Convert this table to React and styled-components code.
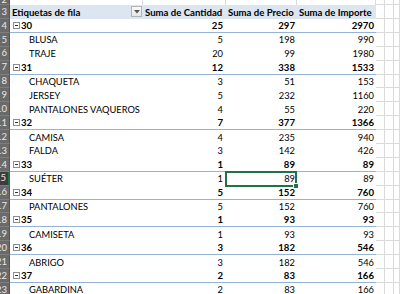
import React from 'react'
import styled, { createGlobalStyle, css } from 'styled-components';

const GRID = '#dadada';
const GROUP_LINE = '#95b3d7';
const GREEN = '#217346';

const data = [
    { label: '30', q: 25, p: 297, t: 2970, items: [['BLUSA', 5, 198, 990], ['TRAJE', 20, 99, 1980]] },
    { label: '31', q: 12, p: 338, t: 1533, items: [['CHAQUETA', 3, 51, 153], ['JERSEY', 5, 232, 1160], ['PANTALONES VAQUEROS', 4, 55, 220]] },
    { label: '32', q: 7, p: 377, t: 1366, items: [['CAMISA', 4, 235, 940], ['FALDA', 3, 142, 426]] },
    { label: '33', q: 1, p: 89, t: 89, items: [['SUÉTER', 1, 89, 89]] },
    { label: '34', q: 5, p: 152, t: 760, items: [['PANTALONES', 5, 152, 760]] },
    { label: '35', q: 1, p: 93, t: 93, items: [['CAMISETA', 1, 93, 93]] },
    { label: '36', q: 3, p: 182, t: 546, items: [['ABRIGO', 3, 182, 546]] },
    { label: '37', q: 2, p: 83, t: 166, items: [['GABARDINA', 2, 83, 166]] },
];

function buildRows() {
    const rows = [];
    let n = 4;
    data.forEach(g => {
        rows.push({ n: n++, group: true, label: g.label, q: g.q, p: g.p, t: g.t });
        g.items.forEach(([label, q, p, t]) => {
            rows.push({ n: n++, group: false, label, q, p, t });
        });
    });
    return rows;
}

function MinusBox() {
    return (
        <svg width="7" height="7" viewBox="0 0 7 7">
            <rect x="0.5" y="0.5" width="6" height="6" fill="#fff" stroke="#8c8c8c" />
            <line x1="2" y1="3.5" x2="5" y2="3.5" stroke="#333" />
        </svg>
    )
}

function App() {
    const rows = buildRows();
    return (
        <>
            <GlobalStyle />
            <Sheet>
                <Row $h={5}>
                    <RowHead $top>2</RowHead>
                    <Cell $grid />
                    <Cell $grid />
                    <Cell $grid />
                    <Cell $grid />
                    <Cell $grid $outer />
                    <Cell $grid $outer />
                    <Cell $grid $outer />
                </Row>
                <Row $h={14}>
                    <RowHead>3</RowHead>
                    <HeadCell>
                        Etiquetas de fila
                        <FilterButton>
                            <svg width="6" height="4" viewBox="0 0 6 4"><path d="M0 0 L6 0 L3 3.5 Z" fill="#555" /></svg>
                        </FilterButton>
                    </HeadCell>
                    <HeadCell>Suma de Cantidad</HeadCell>
                    <HeadCell>Suma de Precio</HeadCell>
                    <HeadCell>Suma de Importe</HeadCell>
                    <Cell $outer />
                    <Cell $outer />
                    <Cell $outer />
                </Row>
                {rows.map(r => {
                    const selected = r.n === 15;
                    return (
                        <Row key={r.n} $h={13.9}>
                            <RowHead $selected={selected}>{r.n}</RowHead>
                            <LabelCell $group={r.group}>
                                {r.group && <MinusBox />}
                                <span>{r.label}</span>
                            </LabelCell>
                            <NumCell $group={r.group} $pad={3}>{r.q}</NumCell>
                            <NumCell $group={r.group} $pad={2} $selected={selected}>{r.p}</NumCell>
                            <NumCell $group={r.group} $pad={2}>{r.t}</NumCell>
                            <Cell $outer />
                            <Cell $outer />
                            <Cell $outer />
                        </Row>
                    )
                })}
            </Sheet>
        </>
    )
}

export default App

const GlobalStyle = createGlobalStyle`
    html, body {
        margin: 0;
        padding: 0;
        background: #fff;
        overflow: hidden;
    }
    body {
        font-family: Lato, "Liberation Sans", sans-serif;
        font-size: 9.3px;
        color: #000;
    }
`

const Sheet = styled.div`
    width: 400px;
    height: 294px;
    overflow: hidden;
`

const Row = styled.div`
    display: grid;
    grid-template-columns: 10px 133px 83px 71px 79px 9px 9px 1fr;
    height: ${p => p.$h}px;
`

const RowHead = styled.div`
    background: ${p => p.$selected ? '#3c3c3c' : '#6a6a6a'};
    color: #e8e8e8;
    font-size: 9.5px;
    display: flex;
    align-items: ${p => p.$top ? 'flex-end' : 'center'};
    justify-content: flex-end;
    padding-right: 2px;
    overflow: hidden;
    box-sizing: border-box;
    border-bottom: 1px solid #7d7d7d;
    border-right: ${p => p.$selected ? `2px solid ${GREEN}` : '1px solid #555'};
    line-height: 1;
`

const Cell = styled.div`
    box-sizing: border-box;
    ${p => p.$grid && css`border-right: 1px solid ${GRID};`}
    ${p => p.$outer && css`
        border-right: 1px solid ${GRID};
        border-bottom: 1px solid ${GRID};
    `}
`

const HeadCell = styled.div`
    position: relative;
    background: #dce6f1;
    font-weight: bold;
    font-size: 9.6px;
    display: flex;
    align-items: center;
    padding-left: 2px;
    white-space: nowrap;
    overflow: hidden;
`

const FilterButton = styled.div`
    position: absolute;
    right: 1px;
    top: 1px;
    width: 11px;
    height: 11px;
    box-sizing: border-box;
    border: 1px solid #b3b3b3;
    background: linear-gradient(#fafafa, #e6e6e6);
    display: flex;
    align-items: center;
    justify-content: center;
`

const groupLine = css`
    ${p => p.$group && css`
        border-bottom: 1px solid ${GROUP_LINE};
        font-weight: bold;
        font-size: 9.6px;
    `}
`

const LabelCell = styled.div`
    box-sizing: border-box;
    display: flex;
    align-items: center;
    gap: 1px;
    padding-left: ${p => p.$group ? '3px' : '19px'};
    white-space: nowrap;
    ${groupLine}
`

const NumCell = styled.div`
    position: relative;
    box-sizing: border-box;
    display: flex;
    align-items: center;
    justify-content: flex-end;
    padding-right: ${p => p.$pad}px;
    ${groupLine}

    ${p => p.$selected && css`
        &::after {
            content: '';
            position: absolute;
            inset: -1px 0 -1px -1px;
            border: 2px solid ${GREEN};
        }
        &::before {
            content: '';
            position: absolute;
            right: -2px;
            bottom: -3px;
            width: 4px;
            height: 4px;
            background: ${GREEN};
            border: 1px solid #fff;
            z-index: 1;
        }
    `}
`
